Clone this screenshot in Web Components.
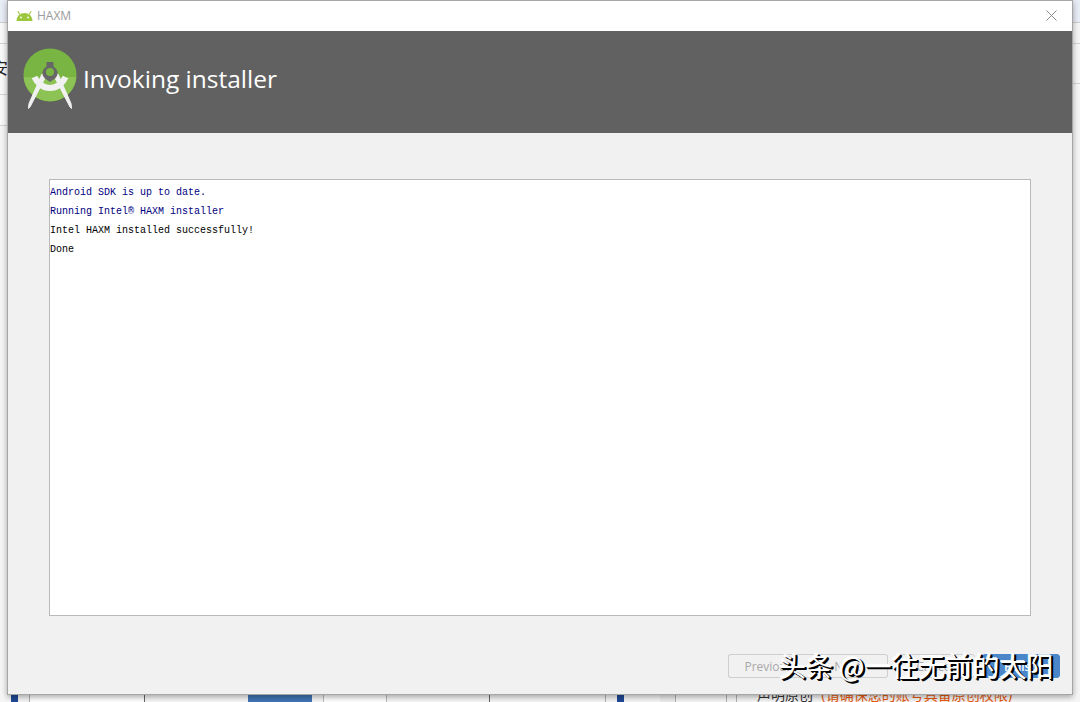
<!DOCTYPE html>
<html lang="zh">
<head>
<meta charset="utf-8">
<title>HAXM</title>
<style>
    html, body { margin: 0; height: 100%; overflow: hidden; background: #fff; }
</style>
</head>
<body>
<desktop-backdrop></desktop-backdrop>
<installer-window title-text="HAXM">
    <wizard-header slot="header">Invoking installer</wizard-header>
    <log-pane slot="body">
        <log-line tone="info">Android SDK is up to date.</log-line>
        <log-line tone="info">Running Intel® HAXM installer</log-line>
        <log-line>Intel HAXM installed successfully!</log-line>
        <log-line>Done</log-line>
    </log-pane>
    <wizard-button slot="nav" width="80" joined="left">Previous</wizard-button>
    <wizard-button slot="nav" width="80" joined="right">Next</wizard-button>
    <wizard-button slot="action" width="80">Cancel</wizard-button>
    <wizard-button slot="action" width="78" primary>Finish</wizard-button>
</installer-window>
<water-mark>头条 @一往无前的太阳</water-mark>

<script>
/**
 * 背後のページ（ウィンドウの外に少しだけ見える部分）
 */
class DesktopBackdrop extends HTMLElement {
    constructor() {
        super();
        const shadowRoot = this.attachShadow({ mode: 'open' });
        shadowRoot.innerHTML = this.template();
    }

    template() {
        return `
            <style>
                :host {
                    display: block;
                    position: absolute;
                    inset: 0;
                    overflow: hidden;
                    background: #f6f6f6;
                    font-family: "Liberation Serif", "Noto Sans CJK SC", serif;
                }
                #top { height: 22px; background: #e9edf6; border-bottom: 1px solid #cfcfcf; }
                #rows { display: flex; justify-content: space-between; }
                #left, #right { width: 8px; }
                #left { height: 102px; background: #fafafa; }
                .row { box-sizing: border-box; border-bottom: 1px solid #d4d4d4; }
                #glyph { position: absolute; left: -8px; top: 60px; font-size: 16px; color: #222; line-height: 18px; }
                #bottom {
                    position: absolute;
                    left: 0; right: 0; bottom: 0;
                    height: 12px;
                    display: flex;
                    font-size: 14px;
                }
                #bottom div { box-sizing: border-box; height: 100%; flex: none; }
                .bar { background: #1f4a96; }
                .line { border-right: 1px solid #b0b0b0; }
                .dark { border-right: 1px solid #666; }
                .btn-blue, .btn-white { border-radius: 3px 3px 0 0; margin-top: 3px; }
                .btn-blue { background: #3f74b5; }
                .btn-white { background: #fff; border: 1px solid #bbb; }
                #claim { margin-top: -6px; line-height: 22px; white-space: nowrap; color: #333; font-family: "Liberation Sans", "Noto Sans CJK SC", sans-serif; }
                #claim span { color: #e8590c; margin-left: 8px; }
            </style>
            <div id="top"></div>
            <div id="rows">
                <div id="left">
                    <div class="row" style="height:21px"></div>
                    <div class="row" style="height:51px"></div>
                    <div class="row" style="height:31px"></div>
                </div>
                <div id="right">
                    <div class="row" style="height:21px"></div>
                    <div class="row" style="height:40px"></div>
                </div>
            </div>
            <div id="glyph">安</div>
            <div id="bottom">
                <div style="width:11px"></div>
                <div class="bar" style="width:7px"></div>
                <div class="line" style="width:12px"></div>
                <div class="dark" style="width:115px;background:#fff"></div>
                <div style="width:103px;background:#f7f7f7"></div>
                <div class="btn-blue" style="width:64px"></div>
                <div style="width:11px;background:#f7f7f7"></div>
                <div class="btn-white" style="width:64px"></div>
                <div class="dark" style="width:103px;background:#f7f7f7"></div>
                <div class="line" style="width:116px"></div>
                <div style="width:11px"></div>
                <div class="bar" style="width:7px"></div>
                <div style="width:36px"></div>
                <div class="line" style="width:16px;background:#ededed"></div>
                <div class="line" style="width:51px"></div>
                <div class="line" style="width:10px"></div>
                <div style="width:20px"></div>
                <div id="claim">声明原创<span>(请确保您的账号具备原创权限)</span></div>
            </div>
        `;
    }
}
customElements.define("desktop-backdrop", DesktopBackdrop);

/**
 * インストーラのウィンドウ枠
 */
class InstallerWindow extends HTMLElement {
    constructor() {
        super();
        const shadowRoot = this.attachShadow({ mode: 'open' });
        const template = document.createElement('template');
        template.innerHTML = this.template();
        shadowRoot.appendChild(document.importNode(template.content, true));
        shadowRoot.querySelector('#caption').textContent = this.getAttribute('title-text');
    }

    template() {
        return `
            <style>
                :host {
                    display: flex;
                    flex-direction: column;
                    box-sizing: border-box;
                    position: absolute;
                    left: 7px;
                    top: 0;
                    width: 1066px;
                    height: 695px;
                    background: #f1f1f1;
                    border: 1px solid #a6a6a6;
                    box-shadow: 0 2px 6px rgba(0, 0, 0, .35);
                    font-family: "Open Sans", "Noto Sans", sans-serif;
                }
                #titlebar {
                    flex: none;
                    height: 30px;
                    background: #fff;
                    display: flex;
                    align-items: center;
                    padding: 0 15px 1px 8px;
                    box-sizing: border-box;
                }
                #caption { margin-left: 4px; font-size: 12px; color: #9a9a9a; flex: 1; }
                #content { flex: 1; display: flex; flex-direction: column; padding: 46px 41px 16px; min-height: 0; }
                ::slotted(log-pane) { flex: 1; min-height: 0; }
                #footer { flex: none; display: flex; justify-content: space-between; margin: 38px -29px 0 0; }
                #nav { display: flex; margin-left: 679px; }
                #action { display: flex; gap: 7px; }
                svg { display: block; flex: none; }
            </style>
            <div id="titlebar">
                <svg width="17" height="11" viewBox="0 0 17 11">
                    <path d="M.5 11a8 8 0 0 1 16 0z" fill="#9cc63b"/>
                    <path d="M3.800 4.500 1.900 1.200M13.200 4.500l1.900-3.300" stroke="#9cc63b" stroke-width="1.100" fill="none"/>
                    <circle cx="5" cy="7.500" r=".9" fill="#fff"/>
                    <circle cx="12" cy="7.500" r=".9" fill="#fff"/>
                </svg>
                <span id="caption"></span>
                <svg width="11" height="11" viewBox="0 0 11 11">
                    <path d="M.5.500l10 10M10.500.500l-10 10" stroke="#8a8a8a" stroke-width="1" fill="none"/>
                </svg>
            </div>
            <slot name="header"></slot>
            <div id="content">
                <slot name="body"></slot>
                <div id="footer">
                    <div id="nav"><slot name="nav"></slot></div>
                    <div id="action"><slot name="action"></slot></div>
                </div>
            </div>
        `;
    }
}
customElements.define("installer-window", InstallerWindow);

/**
 * ウィザードの見出し（ロゴと題名）
 */
class WizardHeader extends HTMLElement {
    constructor() {
        super();
        const shadowRoot = this.attachShadow({ mode: 'open' });
        shadowRoot.innerHTML = `
            <style>
                :host {
                    display: flex;
                    flex: none;
                    align-items: flex-start;
                    height: 102px;
                    background: #616161;
                    color: #fff;
                    padding-left: 14px;
                    font-family: "Open Sans", "Noto Sans", sans-serif;
                }
                svg { display: block; flex: none; margin-top: 17px; }
                #text { margin: 30px 0 0 5px; font-size: 24.500px; line-height: 36px; white-space: nowrap; }
            </style>
            <svg width="56" height="62" viewBox="0 0 56 62">
                <circle cx="28" cy="27" r="26.500" fill="#78b542"/>
                <path d="M1.600 29h52.800a26.500 26.500 0 0 1-52.800 0z" fill="#8cc354"/>
                <path d="M12.500 29c2.500 6 8.500 11 15.500 11s13-5 15.500-11" fill="none" stroke="#f1f1f1" stroke-width="6"/>
                <path d="M24 28 8 59l-1.500 1.500.5-5L20 26zM32 28l16 31 1.500 1.500-.5-5L36 26z" fill="#f1f1f1" stroke="#f1f1f1" stroke-width="1" stroke-linejoin="round"/>
                <path d="M24.500 14v4.500a8.500 8.500 0 0 0-4 5.500 7.500 7.500 0 0 0 2.500 6.500l5 3.500 5-3.500a7.500 7.500 0 0 0 2.500-6.500 8.500 8.500 0 0 0-4-5.500V14z" fill="#666"/>
                <circle cx="28" cy="24" r="4" fill="#78b542"/>
            </svg>
            <div id="text"><slot></slot></div>
        `;
    }
}
customElements.define("wizard-header", WizardHeader);

/**
 * ログ表示欄
 */
class LogPane extends HTMLElement {
    constructor() {
        super();
        const shadowRoot = this.attachShadow({ mode: 'open' });
        shadowRoot.innerHTML = `
            <style>
                :host {
                    display: block;
                    box-sizing: border-box;
                    background: #fff;
                    border: 1px solid #b9b9b9;
                    padding: 3px 0 0 0;
                    overflow: hidden;
                }
            </style>
            <slot></slot>
        `;
    }
}
customElements.define("log-pane", LogPane);

/**
 * ログの一行
 */
class LogLine extends HTMLElement {
    constructor() {
        super();
        const shadowRoot = this.attachShadow({ mode: 'open' });
        const color = this.getAttribute('tone') === 'info' ? '#000080' : '#000';
        shadowRoot.innerHTML = `
            <style>
                :host {
                    display: block;
                    height: 19px;
                    line-height: 19px;
                    white-space: nowrap;
                    font-family: "Liberation Mono", "DejaVu Sans Mono", monospace;
                    font-size: 10px;
                    color: ${color};
                }
            </style>
            <slot></slot>
        `;
    }
}
customElements.define("log-line", LogLine);

/**
 * ウィザードのボタン
 */
class WizardButton extends HTMLElement {
    constructor() {
        super();
        const shadowRoot = this.attachShadow({ mode: 'open' });
        const primary = this.hasAttribute('primary');
        const joined = this.getAttribute('joined');
        shadowRoot.innerHTML = `
            <style>
                :host {
                    display: flex;
                    align-items: center;
                    justify-content: center;
                    box-sizing: border-box;
                    width: ${this.getAttribute('width')}px;
                    height: 24px;
                    font-size: 12px;
                    border-radius: ${joined === 'left' ? '3px 0 0 3px' : joined === 'right' ? '0 3px 3px 0' : '3px'};
                    border: 1px solid ${primary ? '#4a86c8' : '#cfcfcf'};
                    ${joined === 'left' ? 'border-right: 0;' : ''}
                    ${joined === 'right' ? 'border-left: 0;' : ''}
                    background: ${primary ? '#4a86c8' : '#f1f1f1'};
                    color: ${primary ? '#fff' : '#a8a8a8'};
                    font-weight: ${primary ? 600 : 400};
                    white-space: nowrap;
                }
            </style>
            <slot></slot>
        `;
    }
}
customElements.define("wizard-button", WizardButton);

/**
 * 右下の透かし文字
 */
class WaterMark extends HTMLElement {
    constructor() {
        super();
        const shadowRoot = this.attachShadow({ mode: 'open' });
        shadowRoot.innerHTML = `
            <style>
                :host {
                    display: block;
                    position: absolute;
                    left: 779px;
                    top: 648px;
                    font-family: "Noto Sans CJK SC", "Liberation Sans", sans-serif;
                    font-size: 27px;
                    line-height: 36px;
                    white-space: nowrap;
                    color: #fff;
                    text-shadow: 1px 1px 0 #000, 2px 1px 0 #000, 2px 2px 0 #000, -1px -1px 0 rgba(255,255,255,.9);
                }
            </style>
            <slot></slot>
        `;
    }
}
customElements.define("water-mark", WaterMark);
</script>
</body>
</html>
